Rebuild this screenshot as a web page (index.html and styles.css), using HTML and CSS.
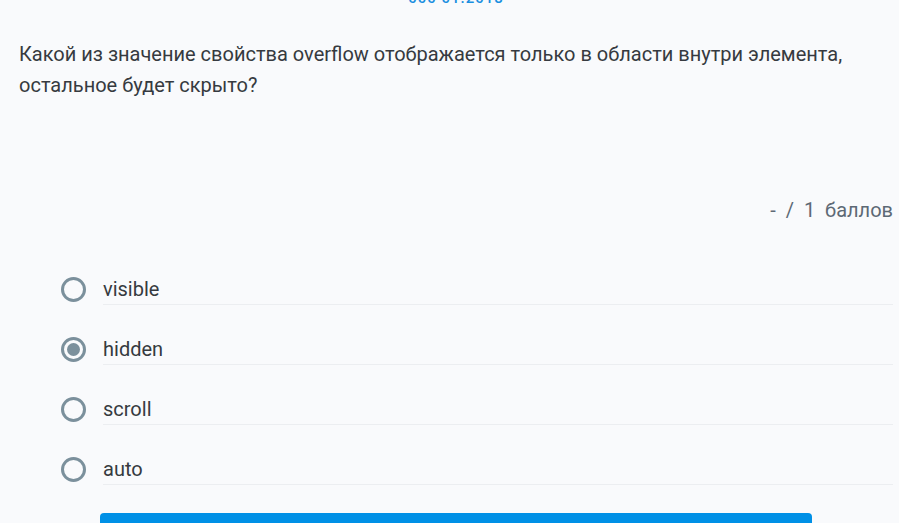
FILE: index.html
```html
<!DOCTYPE html>
<html lang="ru">
<head>
<meta charset="utf-8">
<link rel="stylesheet" href="styles.css">
</head>
<body>
<div class="page">
  <div class="top"><span class="top-text">000 01.2018</span></div>
  <p class="question">Какой из значение свойства overflow отображается только в области внутри элемента, остальное будет скрыто?</p>
  <div class="score">- &nbsp;/ &nbsp;1 &nbsp;баллов</div>
  <ul class="options">
    <li class="option"><span class="radio"></span><span class="label">visible</span></li>
    <li class="option"><span class="radio checked"></span><span class="label">hidden</span></li>
    <li class="option"><span class="radio"></span><span class="label">scroll</span></li>
    <li class="option"><span class="radio"></span><span class="label">auto</span></li>
  </ul>
  <div class="actions"><button class="submit">Ответить</button></div>
</div>
</body>
</html>
```
FILE: styles.css
```css
html, body {
  margin: 0;
  padding: 0;
  background: #f9fafc;
  font-family: Roboto, "Noto Sans", sans-serif;
  overflow: hidden;
}
.page {
  padding: 0 6px 0 19px;
  height: 523px;
  box-sizing: border-box;
}
.top {
  height: 4px;
  overflow: hidden;
  display: flex;
  justify-content: center;
  align-items: flex-end;
}
.top-text {
  color: #1a8fe0;
  font-size: 15px;
  line-height: 11px;
  letter-spacing: 1px;
  font-weight: 500;
}
.question {
  margin: 35px 0 0;
  font-size: 20px;
  line-height: 31px;
  color: #363a40;
}
.score {
  margin-top: 97px;
  text-align: right;
  font-size: 20px;
  line-height: 24px;
  color: #5d6975;
}
.options {
  list-style: none;
  margin: 37px 0 0;
  padding: 0 0 0 42px;
}
.option {
  display: flex;
  align-items: center;
  height: 60px;
}
.radio {
  width: 19px;
  height: 19px;
  border: 3px solid #7b909c;
  border-radius: 50%;
  box-sizing: content-box;
  margin: 0 17px 0 0;
  display: flex;
  align-items: center;
  justify-content: center;
  flex: none;
}
.radio.checked::after {
  content: "";
  width: 13px;
  height: 13px;
  border-radius: 50%;
  background: #7b909c;
}
.label {
  flex: 1;
  font-size: 20px;
  line-height: 24px;
  color: #363a40;
  padding: 18px 0 3px;
  border-bottom: 1px solid #eceef1;
  align-self: flex-start;
}
.actions {
  padding: 14px 0 0 81px;
}
.submit {
  display: block;
  width: 712px;
  height: 40px;
  border: none;
  border-radius: 4px;
  background: #0090e6;
  color: #fff;
  font-family: Roboto, sans-serif;
  font-size: 16px;
}
```
